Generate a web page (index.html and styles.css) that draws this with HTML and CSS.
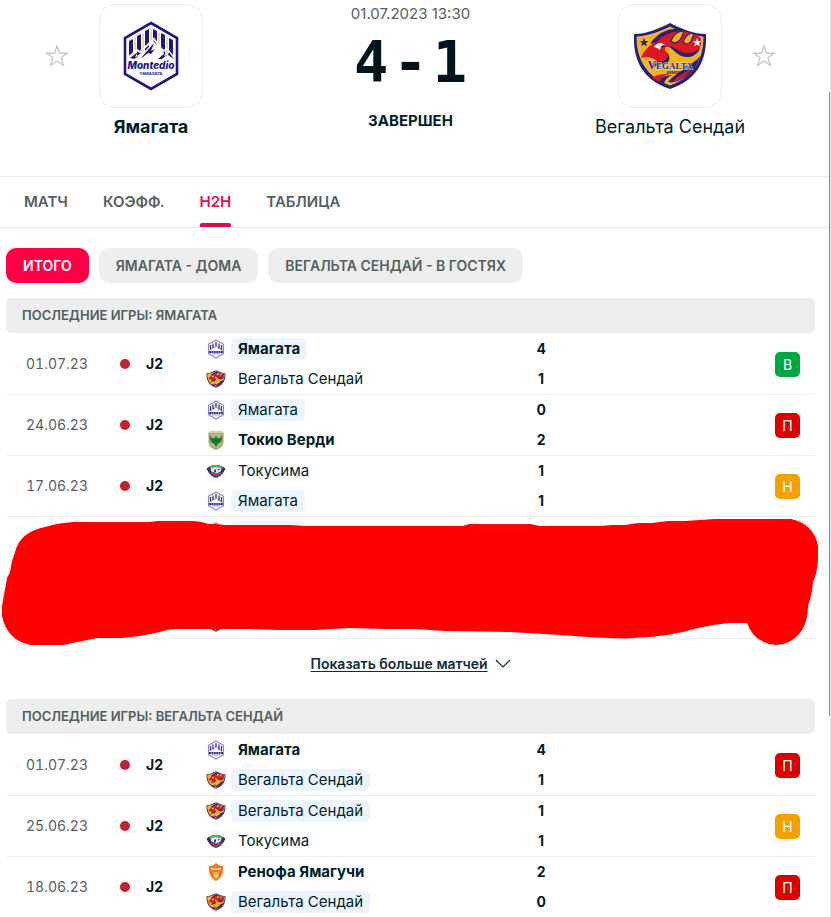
FILE: index.html
```html
<!DOCTYPE html>
<html lang="ru">
<head>
<meta charset="utf-8">
<meta name="viewport" content="width=device-width, initial-scale=1">
<title>Ямагата - Вегальта Сендай</title>
<link rel="stylesheet" href="styles.css">
</head>
<body>
<svg class="sprite" aria-hidden="true">
  <symbol id="star" viewBox="0 0 24 24">
    <path d="M12 2l2.600 7.200h7.700l-6.200 4.600 2.300 7.800L12 17l-6.400 4.600 2.300-7.800-6.200-4.600h7.700z" fill="none" stroke="#c4c9cb" stroke-width="1.400"/>
  </symbol>
  <symbol id="yamagata" viewBox="0 0 56 70">
    <path d="M28 2L54 17v36L28 68 2 53V17z" fill="#fff" stroke="#1b1780" stroke-width="2.600"/>
    <path d="M6 20l4-2v14l-4 5zM14 15l4-2v19l-4 3zM22 10l4-2v18l-4 4zM30 8l4 2v14l-4-4zM38 12l4 2v19l-4-4zM46 17l4 2v15l-4-4z" fill="#1b1780"/>
    <path d="M11 17l2-1v17l-2 1zM19 13l2-1v18l-2 2zM27 8h2v12l-2 3zM35 11l2 1v15l-2-2zM43 15l2 1v17l-2-1z" fill="#e8e27c"/>
    <path d="M6 36l8-7 3 2 14-13 9 12 4-2 6 8" fill="none" stroke="#fff" stroke-width="2"/>
    <path d="M7 37l8-6-3 5 4-1-5 3zM18 37l13-15-3 8 4-2-4 5-3-1-5 4zM35 38l8-7-2 4 3-1-5 4zM46 31l5 7-6-4z" fill="#1b1780"/>
    <text x="28" y="48" text-anchor="middle" class="crest-script">Montedio</text>
    <text x="28" y="54" text-anchor="middle" class="crest-small">YAMAGATA</text>
  </symbol>
  <symbol id="yamagata-mini" viewBox="0 0 20 20">
    <path d="M10 1l7.500 4.300v9.400L10 19l-7.500-4.300V5.300z" fill="#fff" stroke="#8b87c2" stroke-width="1.100"/>
    <path d="M4.500 6v5M7 4.500v5M10 3v4.500M13 4.500v5M15.500 6v5" stroke="#3e3992" stroke-width="1.400"/>
    <path d="M4 11l3-3 1 1 2-3 3 4 1-1 2 3" fill="none" stroke="#77739f" stroke-width=".8"/>
    <path d="M3 13.200h14" stroke="#3c378f" stroke-width="2.200" stroke-dasharray="2 .4"/>
    <path d="M6 15.200h8" stroke="#a4a1d0" stroke-width=".8"/>
  </symbol>
  <symbol id="vegalta-body" viewBox="0 0 76 70">
    <path d="M2 13C15 13 26 8 38 2c12 6 23 11 36 11 1 23-6 45-36 55C8 58 1 36 2 13z" fill="#2c216a"/>
    <path d="M5 16c12-1 23-5 33-10 10 5 21 9 33 10 0 20-8 39-33 48C13 55 5 36 5 16z" fill="#f6b21b" stroke="#d5c7d9" stroke-width=".8"/>
    <path d="M18 23C25 12 36 7 45 8l6 2C38 12 30 17 25 22z" fill="#2c216a"/>
    <path d="M9 37c3-8 8-13 16-16C31 14 39 10 52 10l16 6c2 4 1 9-1 13-6 5-16 5-22 1-4-3-8-5-11-4-2 2-1 4 2 6 2 4-1 8-6 9-5 0-8 2-10 6-1-4 1-6 4-8-5-3-10-4-15-2z" fill="#dc1828"/>
    <path d="M39 20c2-6 6-9 11-10 3 1 0 5-2 9-3 3-6 4-9 1zM51 21c2-5 5-8 9-9 3 1 0 5-1 8-2 3-5 4-8 1z" fill="#f6b21b" stroke="#2c216a" stroke-width="1.200"/>
    <path d="M35 25c8 0 12 7 20 7 5 0 9-1 13-5-2 6-8 10-15 9-8-1-11-8-18-11zM20 47c0-6 5-7 10-7 5-1 7-4 5-8 5 5 2 11-5 12-5 0-8 1-10 3z" fill="#2c216a"/>
    <path d="M22 26c2-4 8-5 11-2l-4 1-1 4-3-2z" fill="#fff"/>
    <path d="M29 25l4-1-2 3z" fill="#2c216a"/>
    <path d="M55 44c5-1 9-4 13-9-3 12-11 20-22 25-4 1-7 2-10 1 5-7 12-8 19-17z" fill="#2c216a"/>
    <path d="M41 61c4-7 12-8 19-15-4 7-9 12-19 15zM20 57c5-4 11-4 17-4-5 2-8 4-10 8z" fill="#dc1828"/>
    <path d="M27 61c2-5 7-7 13-7-4 2-7 4-8 9z" fill="#2c216a"/>
  </symbol>
  <symbol id="vegalta" viewBox="0 0 76 70">
    <use href="#vegalta-body"/>
    <path d="M12 17l1.200 3 3.300.1-2.600 2 1 3.200-2.900-1.900-2.800 1.900 1-3.200-2.600-2 3.200-.1z" fill="#2c216a"/>
    <path d="M65 17l1.200 3 3.300.1-2.600 2 1 3.200-2.900-1.900-2.800 1.900 1-3.200-2.600-2 3.200-.1z" fill="#fff"/>
    <text x="38" y="48" text-anchor="middle" class="crest-serif"><tspan class="crest-cap">V</tspan>EGALTA</text>
    <text x="42" y="53" text-anchor="middle" class="crest-small">SENDAI</text>
  </symbol>
  <symbol id="verdy" viewBox="0 0 20 20">
    <path d="M2.500 2c5 .4 10 .4 15 0v10c0 4-3 6-7.500 8-4.500-2-7.500-4-7.500-8z" fill="#b5a273"/>
    <path d="M3 1h14v2H3z" fill="#c9d9b8"/>
    <path d="M4 4h12v8c0 3-2 4-6 6-4-2-6-3-6-6z" fill="#c3b681"/>
    <path d="M4 5c1 3 3 4 4.500 3L10 6l1.500 2C13 9 15 8 16 5c1 6-2 8-4 9l-2 3-2-3c-2-1-5-3-4-9z" fill="#137a3a"/>
  </symbol>
  <symbol id="tokushima" viewBox="0 0 20 20">
    <path d="M.5 7.500C3 6 5 4 10 4s7 2 9.500 3.500C17 13 14 16 10 17 6 16 3 13 .5 7.500z" fill="#2c2d66"/>
    <path d="M3 7c3-4 11-4 14 0l-3 2H6z" fill="#6bb550"/>
    <path d="M5 8c3-2 7-2 10 0 1 2-2 4-5 4s-6-2-5-4z" fill="#e8ebf5"/>
    <path d="M8 9l2-1v3l-2 1zM12 8h2l-2 2z" fill="#244c8f"/>
    <path d="M4 11c4 2 8 2 12 0l-1 2c-3 2-7 2-10 0z" fill="#d93761"/>
    <path d="M7 15c3 1 5 0 7-1l-4 3z" fill="#279257"/>
  </symbol>
  <symbol id="renofa" viewBox="0 0 20 20">
    <path d="M3 4c3 0 5-1 7-3 2 2 4 3 7 3 .5 7-1 12-7 15C4 16 2.500 11 3 4z" fill="#ee7a1c"/>
    <path d="M5 7h10" stroke="#f9c58b" stroke-width="2"/>
    <path d="M7 10h6l-1 6-2 1-2-1z" fill="#f9a84d"/>
    <circle cx="10.500" cy="14" r="1.500" fill="#fff0d8"/>
  </symbol>
</svg>

<div class="page">
  <header class="match">
    <button class="favorite" type="button" aria-label="Ямагата"><svg><use href="#star"/></svg></button>
    <div class="team">
      <a class="crest" href="#" aria-label="Ямагата"><svg class="crest-hex"><use href="#yamagata"/></svg></a>
      <a class="team-name winner" href="#">Ямагата</a>
    </div>
    <div class="result">
      <time>01.07.2023 13:30</time>
      <div class="score"><span>4</span><span>-</span><span>1</span></div>
      <div class="status">ЗАВЕРШЕН</div>
    </div>
    <div class="team">
      <a class="crest" href="#" aria-label="Вегальта Сендай"><svg class="crest-shield"><use href="#vegalta"/></svg></a>
      <a class="team-name" href="#">Вегальта Сендай</a>
    </div>
    <button class="favorite" type="button" aria-label="Вегальта Сендай"><svg><use href="#star"/></svg></button>
  </header>

  <nav class="tabs">
    <a href="#">МАТЧ</a>
    <a href="#">КОЭФФ.</a>
    <a href="#" class="active" aria-current="page">H2H</a>
    <a href="#">ТАБЛИЦА</a>
  </nav>

  <main>
    <div class="filters">
      <button type="button" class="selected">ИТОГО</button>
      <button type="button">ЯМАГАТА - ДОМА</button>
      <button type="button">ВЕГАЛЬТА СЕНДАЙ - В ГОСТЯХ</button>
    </div>

    <section class="games">
      <h2>ПОСЛЕДНИЕ ИГРЫ: ЯМАГАТА</h2>
      <table>
        <colgroup><col class="c-date"><col class="c-league"><col><col class="c-goals"><col class="c-form"></colgroup>
        <tbody>
          <tr>
            <td class="date">01.07.23</td>
            <td><div class="league"><i class="flag"></i>J2</div></td>
            <td><div class="pair"><div class="side"><svg><use href="#yamagata-mini"/></svg><span class="own win">Ямагата</span></div><div class="side"><svg><use href="#vegalta-body"/></svg><span>Вегальта Сендай</span></div></div></td>
            <td><div class="pair goals"><b>4</b><b>1</b></div></td>
            <td><span class="form won">В</span></td>
          </tr>
          <tr>
            <td class="date">24.06.23</td>
            <td><div class="league"><i class="flag"></i>J2</div></td>
            <td><div class="pair"><div class="side"><svg><use href="#yamagata-mini"/></svg><span class="own">Ямагата</span></div><div class="side"><svg><use href="#verdy"/></svg><span class="win">Токио Верди</span></div></div></td>
            <td><div class="pair goals"><b>0</b><b>2</b></div></td>
            <td><span class="form lost">П</span></td>
          </tr>
          <tr>
            <td class="date">17.06.23</td>
            <td><div class="league"><i class="flag"></i>J2</div></td>
            <td><div class="pair"><div class="side"><svg><use href="#tokushima"/></svg><span>Токусима</span></div><div class="side"><svg><use href="#yamagata-mini"/></svg><span class="own">Ямагата</span></div></div></td>
            <td><div class="pair goals"><b>1</b><b>1</b></div></td>
            <td><span class="form drawn">Н</span></td>
          </tr>
          <tr>
            <td></td><td></td>
            <td><div class="pair"><div class="side"><svg><use href="#yamagata-mini"/></svg><span class="own blank"></span></div><div class="side"></div></div></td>
            <td></td><td></td>
          </tr>
          <tr>
            <td></td><td></td>
            <td><div class="pair"><div class="side"></div><div class="side"><svg><use href="#vegalta-body"/></svg></div></div></td>
            <td></td><td></td>
          </tr>
        </tbody>
      </table>
      <svg class="marker" viewBox="0 516 821 132" preserveAspectRatio="none" aria-hidden="true">
        <path d="M45 527Q57 523 74 522H150L158 521H193Q204 522 208 524H215L225 525H290L305 526H463L469 524H530L540 526H600L612 525H625L638 523H652L668 521H685L715 519H791Q814 524 818 546V560Q817 574 813 582Q812 595 808 606Q808 620 802 630Q793 644 776 645Q754 643 747 623H729L713 625L698 628L683 632L667 635L650 637L625 638.500L595 637.500L560 635L510 632L445 631L415 629H385L350 628L315 630H280L250 629H175Q168 629 160 632L140 636L122 638H97L63 645H30Q7 640 2 616V606L7 578L10 572Q11 562 15 552Q20 532 45 527z" fill="#f00"/>
      </svg>
    </section>

    <div class="more">
      <a href="#"><span>Показать больше матчей</span><svg viewBox="0 0 16 10" aria-hidden="true"><path d="M1 1l7 7 7-7" fill="none" stroke="#0f2d37" stroke-width="1.200"/></svg></a>
    </div>

    <section class="games">
      <h2>ПОСЛЕДНИЕ ИГРЫ: ВЕГАЛЬТА СЕНДАЙ</h2>
      <table>
        <colgroup><col class="c-date"><col class="c-league"><col><col class="c-goals"><col class="c-form"></colgroup>
        <tbody>
          <tr>
            <td class="date">01.07.23</td>
            <td><div class="league"><i class="flag"></i>J2</div></td>
            <td><div class="pair"><div class="side"><svg><use href="#yamagata-mini"/></svg><span class="win">Ямагата</span></div><div class="side"><svg><use href="#vegalta-body"/></svg><span class="own">Вегальта Сендай</span></div></div></td>
            <td><div class="pair goals"><b>4</b><b>1</b></div></td>
            <td><span class="form lost">П</span></td>
          </tr>
          <tr>
            <td class="date">25.06.23</td>
            <td><div class="league"><i class="flag"></i>J2</div></td>
            <td><div class="pair"><div class="side"><svg><use href="#vegalta-body"/></svg><span class="own">Вегальта Сендай</span></div><div class="side"><svg><use href="#tokushima"/></svg><span>Токусима</span></div></div></td>
            <td><div class="pair goals"><b>1</b><b>1</b></div></td>
            <td><span class="form drawn">Н</span></td>
          </tr>
          <tr>
            <td class="date">18.06.23</td>
            <td><div class="league"><i class="flag"></i>J2</div></td>
            <td><div class="pair"><div class="side"><svg><use href="#renofa"/></svg><span class="win">Ренофа Ямагучи</span></div><div class="side"><svg><use href="#vegalta-body"/></svg><span class="own">Вегальта Сендай</span></div></div></td>
            <td><div class="pair goals"><b>2</b><b>0</b></div></td>
            <td><span class="form lost">П</span></td>
          </tr>
        </tbody>
      </table>
    </section>
  </main>
  <div class="scroll-thumb" aria-hidden="true"></div>
</div>
</body>
</html>
```
FILE: styles.css
```css
* { box-sizing: border-box; }

body {
  margin: 0;
  background: #fff;
  color: #001e28;
  font-family: Inter, "Noto Sans", sans-serif;
  font-size: 15px;
  line-height: 20px;
}

a { color: inherit; text-decoration: none; }

button { font: inherit; border: 0; cursor: pointer; }

.sprite { position: absolute; width: 0; height: 0; }

.crest-script { font: italic 800 10px Inter, sans-serif; fill: #1b1780; }
.crest-small { font: 700 4px Inter, sans-serif; fill: #1b1780; }
.crest-serif { font: 700 9px "Liberation Serif", serif; fill: #2c216a; stroke: #f3dfc5; stroke-width: 1px; paint-order: stroke; }
.crest-cap { font-size: 12px; }

.page { position: relative; overflow: hidden; border-right: 1px solid #e8e8e8; }

.scroll-thumb {
  position: absolute;
  top: 10%;
  right: 0;
  width: 1px;
  height: 68%;
  background: #8d8d8d;
}

/* Match header */
.match {
  display: grid;
  grid-template-columns: 28px 160px 1fr 160px 28px;
  padding: 4px 52px 0 43px;
  min-height: 176px;
}

.favorite { align-self: start; margin-top: 40px; padding: 0 2px; height: 24px; background: none; }
.favorite svg { display: block; width: 24px; height: 24px; }

.team { display: flex; flex-direction: column; align-items: center; gap: 7px; }

.crest {
  display: grid;
  place-items: center;
  width: 104px;
  height: 104px;
  border: 1px solid #eee;
  border-radius: 16px;
}
.crest-hex { width: 56px; height: 70px; }
.crest-shield { width: 76px; height: 70px; }

.team-name { font-size: 18px; line-height: 24px; white-space: nowrap; }
.winner { font-weight: 700; }

.result { display: flex; flex-direction: column; align-items: center; }
.result time { color: #555e61; }
.score {
  display: flex;
  gap: 5px;
  margin-top: 4px;
  font: 700 57px/68px "DejaVu Sans Mono", monospace;
  color: #00141e;
}
.status { margin-top: 15px; font-weight: 700; }

/* Tabs */
.tabs {
  display: flex;
  gap: 35px;
  padding: 0 24px;
  border-top: 1px solid #eaeaea;
  border-bottom: 1px solid #eaeaea;
  color: #555e61;
  font-weight: 600;
}
.tabs a { padding: 15px 0 11px; border-bottom: 4px solid transparent; }
.tabs .active { color: #dc1046; position: relative; }
.tabs .active::after {
  content: "";
  position: absolute;
  inset: auto 0 -4px;
  height: 4px;
  border-radius: 2px 2px 0 0;
  background: #dc1046;
}

main { padding: 20px 15px 0 6px; }

.filters { display: flex; gap: 10px; margin-bottom: 15px; }
.filters button {
  height: 35px;
  padding: 0 17px;
  border-radius: 10px;
  background: #eee;
  color: #555e61;
  font-size: 14px;
  font-weight: 600;
}
.filters .selected { background: #ff0046; color: #fff; }

/* Game lists */
.games { position: relative; }

h2 {
  margin: 0 0 1px;
  padding: 0 16px;
  border-radius: 5px;
  background: #eee;
  color: #555e61;
  font-size: 13px;
  font-weight: 600;
  line-height: 35px;
}

table { width: 100%; table-layout: fixed; border-spacing: 0; }
.c-date { width: 108px; }
.c-league { width: 92px; }
.c-goals { width: 30px; }
.c-form { width: 32%; }

td { height: 61px; padding: 0; border-bottom: 1px solid #eee; vertical-align: middle; }

.date { padding-left: 20px; color: #555e61; font-size: 14px; font-variant-numeric: tabular-nums; }

.league { display: flex; align-items: center; gap: 10px; font-size: 14px; font-weight: 700; }
.flag { display: grid; place-items: center; width: 22px; height: 15px; background: #fafafa; }
.flag::before { content: ""; width: 10px; height: 10px; border-radius: 50%; background: #bf2330; }

.pair { display: grid; grid-auto-rows: 22px; gap: 8px; line-height: 22px; }
.side { display: flex; align-items: center; gap: 5px; }
.side svg { width: 20px; height: 20px; }
.side span { padding: 0 7px; border-radius: 5px; white-space: nowrap; }
.side .own { background: #ecf5ff; }
.side .blank { width: 74px; height: 22px; }
.win { font-weight: 700; }
.goals { justify-items: center; font-size: 14px; }

.form {
  display: block;
  width: 25px;
  margin: 0 15px 0 auto;
  border-radius: 5px;
  color: #fff;
  font-size: 14px;
  line-height: 25px;
  text-align: center;
}
.won { background: #00a83f; }
.lost { background: #dc0000; }
.drawn { background: #f3a000; }

.marker { position: absolute; left: -6px; bottom: -9px; width: calc(100% + 12px); height: 132px; }

.more { display: flex; justify-content: center; padding: 15px 0 25px; font-size: 14px; font-weight: 600; }
.more a { display: flex; align-items: center; gap: 7px; color: #0f2d37; }
.more span { text-decoration: underline; text-underline-offset: 2px; }
.more svg { width: 16px; height: 10px; }
```
